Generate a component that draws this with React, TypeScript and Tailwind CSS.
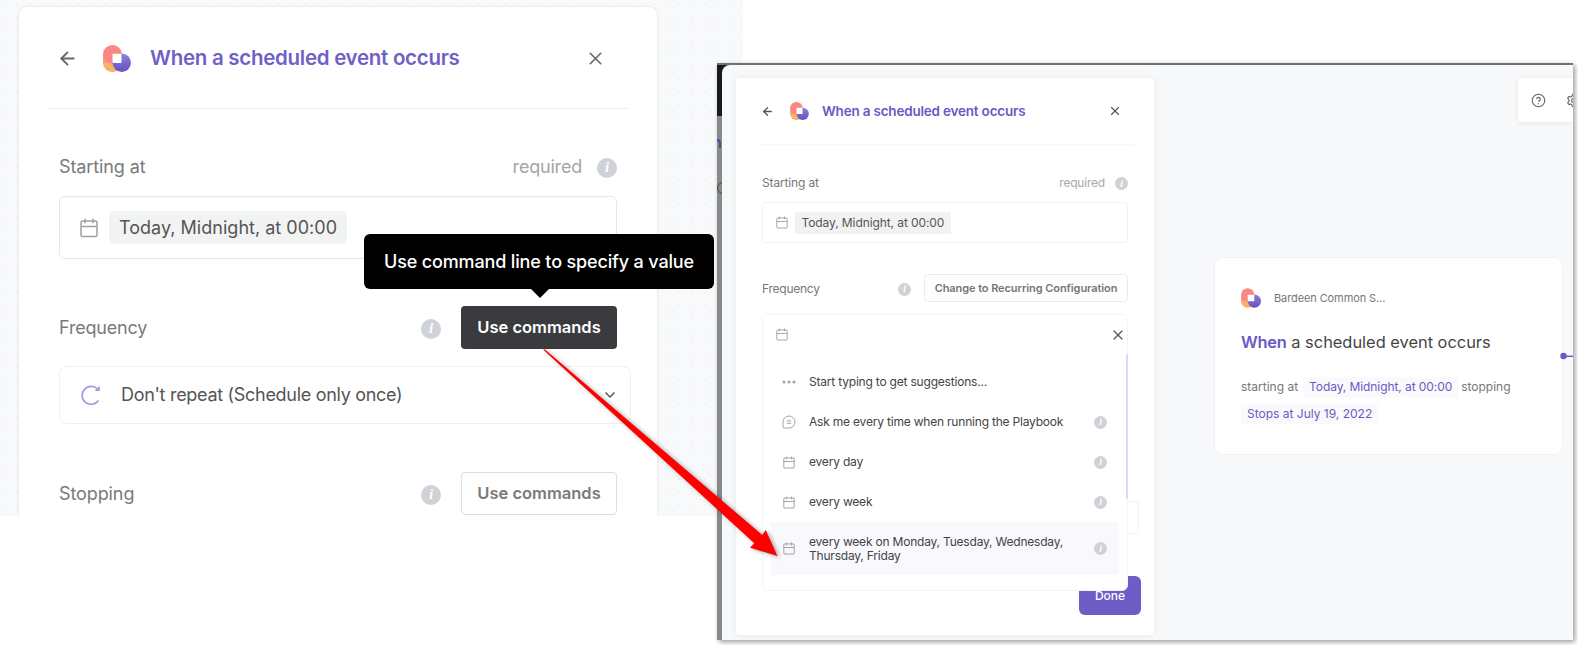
import { useId } from "react";
import { ArrowLeft, CircleHelp, Settings, X } from "lucide-react";

const suggestions = [
  { icon: "dots", text: "Start typing to get suggestions...", info: false },
  { icon: "chat", text: "Ask me every time when running the Playbook", info: true },
  { icon: "calendar", text: "every day", info: true },
  { icon: "calendar", text: "every week", info: true },
  {
    icon: "calendar",
    text: "every week on Monday, Tuesday, Wednesday, Thursday, Friday",
    info: true,
    active: true
  }
];

function Logo({ className }: { className: string }) {
  const id = useId();
  return (
    <svg viewBox="0 0 28 27" className={className}>
      <defs>
        <linearGradient id={`${id}b`} x1="0" y1="0" x2="0" y2="1">
          <stop offset="0" stopColor="#8f80d8" />
          <stop offset="1" stopColor="#6451c4" />
        </linearGradient>
      </defs>
      <rect y="8" width="19" height="19" rx="9" fill="#f9b067" />
      <rect y="8" width="9" height="10" fill="#f9a070" />
      <circle cx="9.4" cy="9.4" r="9.4" fill="#fa8785" />
      <circle cx="18.8" cy="17.8" r="9.2" fill={`url(#${id}b)`} />
      <rect x="9.5" y="8.8" width="9" height="9.2" rx="0.8" fill="#fff" />
    </svg>
  );
}

function CalendarIcon({ className }: { className: string }) {
  return (
    <svg viewBox="0 0 18 20" fill="none" stroke="currentColor" strokeWidth="1.5" className={className}>
      <rect x="1" y="3" width="16" height="15.5" rx="1.5" />
      <path d="M1 8.5h16M5 .8v4.4M13 .8v4.4" />
    </svg>
  );
}

function InfoIcon({ className }: { className: string }) {
  return (
    <span
      className={`flex shrink-0 items-center justify-center rounded-full bg-[#cfd2d6] font-['Liberation_Serif',serif] font-bold italic leading-none text-white ${className}`}
    >
      i
    </span>
  );
}

function SuggestionIcon({ name }: { name: string }) {
  if (name === "dots") {
    return (
      <svg viewBox="0 0 14 4" className="w-3.5 fill-[#a5a5a5]">
        <circle cx="2" cy="2" r="1.6" />
        <circle cx="7" cy="2" r="1.6" />
        <circle cx="12" cy="2" r="1.6" />
      </svg>
    );
  }
  if (name === "chat") {
    return (
      <svg viewBox="0 0 14 14" fill="none" stroke="#a5a5a5" className="w-3.5">
        <path d="M1.6 13C.9 11 1 9 1 7a6 6 0 1 1 6 6zM4.8 5.9h4.4M4.8 8.3h4.4" />
      </svg>
    );
  }
  return <CalendarIcon className="h-[13px] w-3 text-[#a0a0a0]" />;
}

function TriggerPanel() {
  return (
    <div className="relative h-[516px] w-[743px] overflow-hidden bg-[#f8f9fb] bg-[radial-gradient(#dfe2e6_0.6px,transparent_1px)] bg-[size:12.5px_12.5px] bg-[position:-1.75px_-1.75px] pl-[19px] pt-[7px]">
      <div className="h-[530px] w-[638px] rounded-lg bg-white shadow-[0_0_3px_rgba(0,0,0,0.12)]">
        <div className="mx-7 flex h-[102px] items-center border-b border-[#f0f0f0] pl-3 pt-px">
          <ArrowLeft className="-ml-0.5 size-[21px] text-[#666]" strokeWidth={2.1} />
          <Logo className="ml-[25px] h-[27px] w-7" />
          <h2 className="ml-[19px] text-[20.5px] font-semibold tracking-[-0.28px] text-[#705fc6]">
            When a scheduled event occurs
          </h2>
          <X className="ml-auto mr-[23px] size-[21px] text-[#666]" strokeWidth={1.8} />
        </div>

        <div className="flex flex-col px-10 text-[18px] tracking-[-0.1px] text-[#7a7a7a]">
          <div className="mt-[46px] flex h-6 items-center">
            <span className="-mt-0.5">Starting at</span>
            <span className="-mt-0.5 ml-auto tracking-[-0.2px] text-[#a5a5a5]">required</span>
            <InfoIcon className="ml-[15px] mt-px size-5 text-[15px]" />
          </div>
          <div className="mt-[17px] flex h-[63px] items-center rounded-md border border-[#e6e6e6] pl-5">
            <CalendarIcon className="h-5 w-[18px] text-[#a0a0a0]" />
            <span className="ml-[11px] rounded bg-[#f2f3f3] px-[10px] py-[3px] tracking-[0.02px] text-[#555]">
              Today, Midnight, at 00:00
            </span>
          </div>

          <div className="mt-[47px] flex h-[43px] items-center">
            <span className="tracking-[-0.2px]">Frequency</span>
            <InfoIcon className="ml-auto mt-0.5 size-5 text-[15px]" />
            <button className="relative ml-5 h-[43px] w-[156px] rounded bg-[#3a3b3f] text-[16.5px] font-semibold tracking-normal text-white">
              Use commands
              <span className="absolute -top-[72px] right-[-97px] flex h-[55px] w-[350px] items-center justify-center rounded-md bg-black text-[18px] font-medium tracking-[-0.15px]">
                Use command line to specify a value
                <svg viewBox="0 0 18 9" className="absolute left-[167px] top-[55px] h-[9px] w-[18px]">
                  <path d="M0 0h18L9 9z" />
                </svg>
              </span>
            </button>
          </div>
          <div className="mt-[17px] -mr-[14px] flex h-[58px] items-center rounded-lg border border-[#f0f0f0] pl-[21px] pr-[14px] text-[#555]">
            <svg viewBox="0 0 20 20" fill="none" stroke="#a79be0" strokeWidth="1.7" className="size-5">
              <path d="M17.5 15.5A9 9 0 1 1 16.5 4" />
              <path d="M18.8.8V6h-5.2z" fill="#a79be0" stroke="none" />
            </svg>
            <span className="-mt-px ml-5 tracking-[-0.3px]">Don't repeat (Schedule only once)</span>
            <svg viewBox="0 0 12 8" fill="none" stroke="#555" strokeWidth="1.5" className="ml-auto w-3">
              <path d="m1.5 1.5 4.5 4.5 4.5-4.5" />
            </svg>
          </div>

          <div className="mt-[48px] flex h-[43px] items-center">
            <span>Stopping</span>
            <InfoIcon className="ml-auto mt-0.5 size-5 text-[15px]" />
            <button className="ml-5 h-[43px] w-[156px] rounded border border-[#ddd] text-[16.5px] font-semibold tracking-normal">
              Use commands
            </button>
          </div>
        </div>
      </div>
    </div>
  );
}

function CommandMenu() {
  return (
    <div className="absolute left-0 top-0 z-10 h-[277px] w-[366px] rounded-md border border-[#f5f5f6] bg-white">
      <div className="flex h-[39px] items-center pl-[13px] pr-px">
        <CalendarIcon className="h-[13px] w-3 text-[#a5a5a5]" />
        <X className="ml-auto size-4 text-[#555]" strokeWidth={1.8} />
      </div>
      <div className="mx-2 pt-2 text-[12px] leading-[14px] tracking-[-0.2px] text-[#444]">
        {suggestions.map((item) => (
          <div
            key={item.text}
            className={`flex items-center pl-[11px] pr-3 ${item.active ? "h-[53px] bg-[#f8f8fd]" : "h-10"}`}
          >
            <span className="flex w-[14px] justify-center">
              <SuggestionIcon name={item.icon} />
            </span>
            <span className="ml-[13px] w-[265px]">{item.text}</span>
            {item.info && <InfoIcon className="ml-auto size-[13px] text-[10px]" />}
          </div>
        ))}
      </div>
      <div className="absolute -right-px top-[39px] h-[145px] w-0.5 rounded bg-[#dcdaf3]" />
    </div>
  );
}

function CommandPanel() {
  return (
    <div className="h-[557px] w-[418px] rounded bg-white shadow-[0_0_8px_rgba(0,0,0,0.07)]">
      <div className="mx-[21px] flex h-[67px] items-center border-b border-[#f7f7f7] pl-[5px]">
        <ArrowLeft className="-ml-px size-[13px] text-[#555]" strokeWidth={2.4} />
        <Logo className="ml-4 h-[18px] w-[19px]" />
        <h2 className="ml-[13px] text-[13.5px] font-semibold tracking-[-0.2px] text-[#6a59c4]">
          When a scheduled event occurs
        </h2>
        <X className="ml-auto mr-[11px] size-[14px] text-[#555]" strokeWidth={2} />
      </div>

      <div className="flex flex-col px-[26px] text-[12px] tracking-[-0.15px] text-[#777]">
        <div className="mt-[30px] flex h-4 items-center">
          <span>Starting at</span>
          <span className="ml-auto tracking-[-0.2px] text-[#aaa]">required</span>
          <InfoIcon className="ml-[10px] mt-px size-[13px] text-[10px]" />
        </div>
        <div className="mt-[11px] flex h-[41px] items-center rounded border border-[#f3f3f3] pl-[13px]">
          <CalendarIcon className="h-[13px] w-3 text-[#a5a5a5]" />
          <span className="ml-[7px] bg-[#f2f2f3] px-[6.5px] py-[2px] tracking-[-0.09px] text-[#555]">
            Today, Midnight, at 00:00
          </span>
        </div>

        <div className="mt-[31px] flex h-7 items-center">
          <span className="mt-px tracking-[-0.25px]">Frequency</span>
          <InfoIcon className="ml-auto mt-0.5 size-[13px] text-[10px]" />
          <button className="ml-[13px] h-7 w-[204px] rounded-sm border border-[#ebebeb] text-[11px] font-semibold tracking-[-0.08px]">
            Change to Recurring Configuration
          </button>
        </div>
        <div className="relative mt-3 h-10">
          <CommandMenu />
        </div>
        <div className="-mr-[11px] mt-[147px] h-[33px] rounded border border-[#f2f2f2]" />
        <button className="-mr-[13px] mt-[42px] h-[39px] w-[62px] self-end rounded-md bg-[#6e5dc6] font-medium tracking-normal text-white">
          Done
        </button>
      </div>
    </div>
  );
}

function TriggerCard() {
  return (
    <div className="flex h-[198px] w-[349px] flex-col rounded-[9px] border border-[#eff1f3] bg-white px-[26px] pt-[30px]">
      <div className="flex items-center text-[#777]">
        <Logo className="h-5 w-5" />
        <span className="ml-[13px] text-[11px] tracking-[-0.1px]">Bardeen Common S...</span>
      </div>
      <p className="mt-[22px] text-[16.4px] leading-6 text-[#444]">
        <span className="font-semibold tracking-[-0.2px] text-[#6a59c4]">When</span> a scheduled event occurs
      </p>
      <div className="mt-[23px] text-[12px] leading-5 text-[#777]">
        <div className="flex">
          <span>starting at</span>
          <span className="ml-[5px] bg-[#fafafd] px-[6px] tracking-[-0.08px] text-[#6a59c4]">
            Today, Midnight, at 00:00
          </span>
          <span className="ml-[3px]">stopping</span>
        </div>
        <span className="mt-[7px] inline-block bg-[#fafafd] px-[6px] text-[#6a59c4]">Stops at July 19, 2022</span>
      </div>
    </div>
  );
}

function PlaybookWindow() {
  return (
    <div className="flex h-[577px] w-[856px] overflow-hidden border-t-2 border-[#707174] bg-[linear-gradient(#191a1c_51px,#88898b_51px)] shadow-[2px_2px_5px_rgba(0,0,0,0.4)]">
      <div className="w-[5px] shrink-0 pt-[74px]">
        <div className="h-[9px] w-1 rounded-tr-sm border-r-2 border-t-2 border-[#3754a0]" />
        <div className="mt-[34px] size-3 rounded-full border border-[#444]" />
      </div>
      <div className="relative h-full flex-1 rounded-tl-lg bg-[#f8f9fb] bg-[radial-gradient(#f2f4f6_0.7px,transparent_1.2px)] bg-[size:8px_8px] pl-[14px] pt-[13px]">
        <CommandPanel />

        {/* Canvas: trigger node with its connector and the floating toolbar */}
        <div className="absolute left-[492px] top-[192px]">
          <TriggerCard />
        </div>
        <svg viewBox="0 0 13 8" className="absolute left-[838px] top-[287px] h-2 w-[13px]">
          <circle cx="3.5" cy="4" r="3.2" fill="#6a59c4" />
          <path d="M4 4.3h9" stroke="#6a59c4" strokeWidth="1.4" />
        </svg>
        <div className="absolute right-0 top-[13px] flex h-11 w-[55px] items-center overflow-hidden rounded-l bg-white pl-[13px] text-[#666] shadow-[0_1px_6px_rgba(0,0,0,0.08)]">
          <CircleHelp className="size-[15px] shrink-0" strokeWidth={1.8} />
          <Settings className="ml-5 size-[15px] shrink-0" strokeWidth={1.8} />
        </div>
      </div>
    </div>
  );
}

export default function App() {
  return (
    <div className="relative h-[645px] w-[1578px] overflow-hidden bg-white font-['Inter',sans-serif]">
      <TriggerPanel />
      <div className="absolute left-[717px] top-[63px]">
        <PlaybookWindow />
      </div>
      <svg
        viewBox="0 0 240 212"
        className="absolute left-[541px] top-[347px] z-20 h-[212px] w-[240px] drop-shadow-[2px_1px_2px_rgba(0,0,0,0.35)]"
      >
        <path d="M2 2.5 4 2.5 221.3 188 224.7 183 236.5 209 209 200.7 213.3 196.3Z" fill="#fe0000" />
      </svg>
    </div>
  );
}
